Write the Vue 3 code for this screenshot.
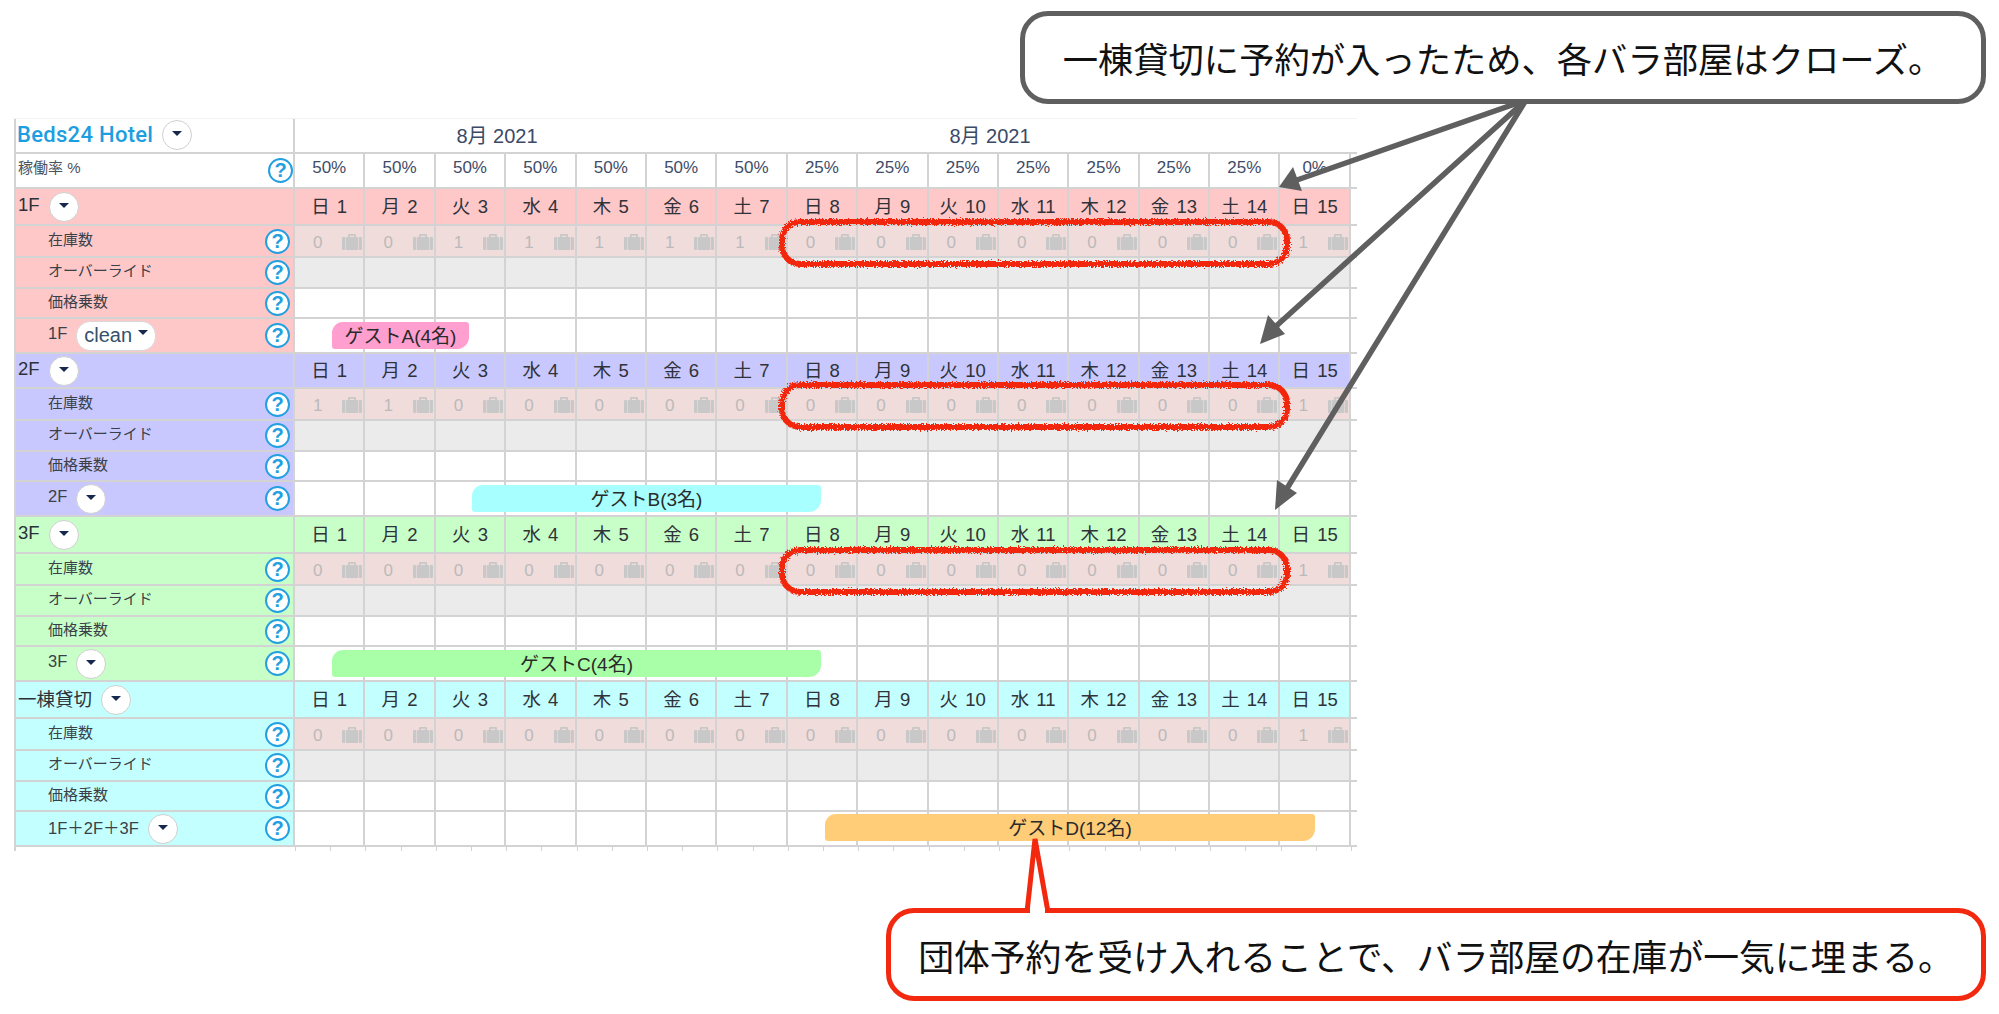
<script setup>
const days = ['日 1', '月 2', '火 3', '水 4', '木 5', '金 6', '土 7', '日 8', '月 9', '火 10', '水 11', '木 12', '金 13', '土 14', '日 15']
const rates = ['50%', '50%', '50%', '50%', '50%', '50%', '50%', '25%', '25%', '25%', '25%', '25%', '25%', '25%', '0%']

const sections = [
  {
    name: '1F', key: 'one', foot: '1F', pill: true,
    stock: [0, 0, 1, 1, 1, 1, 1, 0, 0, 0, 0, 0, 0, 0, 1],
    guest: { label: 'ゲストA(4名)', cls: 'pink' }
  },
  {
    name: '2F', key: 'two', foot: '2F',
    stock: [1, 1, 0, 0, 0, 0, 0, 0, 0, 0, 0, 0, 0, 0, 1],
    guest: { label: 'ゲストB(3名)', cls: 'cyan' }
  },
  {
    name: '3F', key: 'three', foot: '3F',
    stock: [0, 0, 0, 0, 0, 0, 0, 0, 0, 0, 0, 0, 0, 0, 1],
    guest: { label: 'ゲストC(4名)', cls: 'green' }
  },
  {
    name: '一棟貸切', key: 'all', foot: '1F＋2F＋3F',
    stock: [0, 0, 0, 0, 0, 0, 0, 0, 0, 0, 0, 0, 0, 0, 1],
    guest: { label: 'ゲストD(12名)', cls: 'orange' }
  }
]

const loops = [222, 385, 550]
</script>

<template>
  <div class="page">
    <div class="sheet">
      <div class="row month-row">
        <div class="label top-label">
          <span class="hotel">Beds24 Hotel</span>
          <span class="drop"><i class="caret"></i></span>
        </div>
        <div class="months">
          <span class="month first">8月 2021</span>
          <span class="month second">8月 2021</span>
        </div>
      </div>

      <div class="row rate-row">
        <div class="label rate-label">
          <span class="rate-text">稼働率 %</span>
          <span class="help">?</span>
        </div>
        <div v-for="(r, i) in rates" :key="i" class="cell rate">{{ r }}</div>
      </div>

      <div v-for="s in sections" :key="s.key" class="section" :class="s.key">
        <div class="row head-row">
          <div class="label">
            <span class="sec-name">{{ s.name }}</span>
            <span class="drop"><i class="caret"></i></span>
          </div>
          <div v-for="d in days" :key="d" class="cell day">{{ d }}</div>
        </div>

        <div class="row stock-row">
          <div class="label sub"><span class="sub-text">在庫数</span><span class="help">?</span></div>
          <div v-for="(n, i) in s.stock" :key="i" class="cell stock">
            <span class="num">{{ n }}</span>
            <svg class="bag" viewBox="0 0 20 16" width="20" height="16">
              <path d="M6 3.500V1.200C6 .5 6.500 0 7.200 0h5.600c.7 0 1.200.5 1.200 1.200v2.300h-1.800V1.700H7.800v1.800z" />
              <rect x="0" y="3" width="3.400" height="13" rx="1" />
              <rect x="4" y="3" width="12" height="13" rx=".8" />
              <rect x="16.600" y="3" width="3.400" height="13" rx="1" />
            </svg>
          </div>
        </div>

        <div class="row over-row">
          <div class="label sub"><span class="sub-text">オーバーライド</span><span class="help">?</span></div>
          <div v-for="d in days" :key="d" class="cell over"></div>
        </div>

        <div class="row price-row">
          <div class="label sub"><span class="sub-text">価格乗数</span><span class="help">?</span></div>
          <div v-for="d in days" :key="d" class="cell blank"></div>
        </div>

        <div class="row book-row">
          <div class="label sub">
            <span class="foot-text">{{ s.foot }}</span>
            <span v-if="s.pill" class="pill">clean<i class="caret"></i></span>
            <span v-else class="drop"><i class="caret"></i></span>
            <span class="help">?</span>
          </div>
          <div v-for="d in days" :key="d" class="cell blank"></div>
          <div class="bar" :class="s.guest.cls">{{ s.guest.label }}</div>
        </div>
      </div>

      <div class="ticks"></div>
    </div>

    <!-- callouts and hand drawn marks sit on top of the table -->
    <svg class="marks" width="1999" height="1014" viewBox="0 0 1999 1014">
      <defs>
        <filter id="rough" x="-5%" y="-30%" width="110%" height="160%">
          <feTurbulence type="fractalNoise" baseFrequency="0.7" numOctaves="2" seed="4" />
          <feDisplacementMap in="SourceGraphic" scale="6" />
        </filter>
      </defs>

      <g fill="none" stroke="#f2280f" stroke-width="6" filter="url(#rough)">
        <rect v-for="y in loops" :key="y" x="782" :y="y" width="505" height="42" rx="18" />
      </g>

      <g stroke="#5f5f5f" stroke-width="5.500" stroke-linecap="round">
        <line x1="1526" y1="100" x2="1297" y2="180" />
        <line x1="1526" y1="100" x2="1274" y2="328" />
        <line x1="1526" y1="100" x2="1286" y2="490" />
      </g>
      <g fill="#5f5f5f">
        <polygon points="1279,187 1293,167 1302,191" />
        <polygon points="1260,344 1268,315 1285,334" />
        <polygon points="1275,510 1277,480 1297,493" />
      </g>

      <path d="M1027 912 L1035 839 L1048 912" fill="#fff" stroke="#f2280f" stroke-width="5" stroke-linejoin="miter" />
    </svg>

    <div class="callout gray">一棟貸切に予約が入ったため、各バラ部屋はクローズ。</div>
    <div class="callout red">団体予約を受け入れることで、バラ部屋の在庫が一気に埋まる。</div>
    <div class="notch"></div>
  </div>
</template>

<style scoped>
.page {
  position: relative;
  width: 1999px;
  height: 1014px;
  padding: 118px 0 0 14px;
  box-sizing: border-box;
  overflow: hidden;
  background: #fff;
  font-family: "Liberation Sans", "Noto Sans CJK JP", sans-serif;
  color: #34425a;
}

.sheet {
  width: 1343px;
}

.row {
  position: relative;
  display: grid;
  grid-template-columns: 281px repeat(15, 70.4px);
  box-sizing: border-box;
  border-bottom: 2px solid #d3d3d3;
}

.month-row {
  height: 36px;
  grid-template-columns: 281px 1fr;
  border-top: 1px solid #f2f2f2;
}

.rate-row {
  height: 35px;
}

.label {
  display: flex;
  align-items: center;
  box-sizing: border-box;
  padding-left: 2px;
  border-left: 2px solid #d3d3d3;
  border-right: 2px solid #d3d3d3;
}

.top-label {
  padding-left: 1px;
  padding-bottom: 2px;
}

.hotel {
  font-family: Roboto, "Liberation Sans", sans-serif;
  font-size: 22px;
  font-weight: 500;
  letter-spacing: 0.3px;
  color: #1d9ee0;
}

.drop {
  flex: none;
  display: flex;
  justify-content: center;
  width: 30px;
  height: 30px;
  margin-left: 9px;
  padding-top: 10px;
  box-sizing: border-box;
  border: 1px solid #cfcfcf;
  border-radius: 50%;
  background: #fff;
}

.caret {
  width: 0;
  height: 0;
  border-left: 5px solid transparent;
  border-right: 5px solid transparent;
  border-top: 5px solid #16284d;
}

.months {
  display: flex;
  align-items: center;
  font-size: 20px;
  padding-bottom: 2px;
}

.month {
  text-align: center;
  color: #3b4a66;
}

.month.first {
  width: 404px;
}

.month.second {
  width: 582px;
}

.rate-label {
  justify-content: space-between;
  padding-right: 0;
}

.rate-text {
  font-size: 15px;
  color: #4a5260;
  padding-bottom: 8px;
}

.help {
  flex: none;
  display: flex;
  align-items: center;
  justify-content: center;
  width: 25px;
  height: 25px;
  margin-left: auto;
  box-sizing: border-box;
  border: 2px solid #24a0e0;
  border-radius: 50%;
  background: #fff;
  color: #24a0e0;
  font-size: 20px;
  font-weight: 700;
}

.cell {
  box-sizing: border-box;
  border-right: 2px solid #d3d3d3;
}

.rate {
  display: flex;
  justify-content: center;
  padding-top: 4px;
  font-size: 17px;
  color: #3f4d68;
}

.section .head-row {
  height: 37px;
}

.section.two .head-row {
  height: 35px;
}

.stock-row {
  height: 32px;
}

.over-row {
  height: 31px;
}

.price-row {
  height: 30px;
}

.book-row {
  height: 35px;
}

.one .label,
.one .day {
  background: #ffc8c8;
}

.two .label,
.two .day {
  background: #c8c8ff;
}

.three .label,
.three .day {
  background: #c8ffc8;
}

.all .label,
.all .day {
  background: #c4ffff;
}

.sec-name {
  font-size: 18.500px;
  color: #2c3038;
  padding-bottom: 3px;
}

.day {
  display: flex;
  align-items: center;
  justify-content: center;
  padding-bottom: 4px;
  font-size: 18.500px;
  word-spacing: 2px;
  color: #2f3238;
}

.sub {
  padding-left: 32px;
  padding-right: 3px;
}

.sub-text {
  font-size: 15px;
  color: #3a3f48;
  padding-bottom: 6px;
}

.foot-text {
  font-size: 16.500px;
  color: #3a3f48;
  padding-bottom: 4px;
}

.pill {
  flex: none;
  display: flex;
  align-items: center;
  gap: 6px;
  height: 28px;
  margin-left: 9px;
  padding: 0 7px;
  border: 1px solid #d8d8d8;
  border-radius: 14px;
  background: #fff;
  font-size: 20px;
  color: #34506b;
}

.pill .caret {
  margin-bottom: 6px;
}

.stock {
  position: relative;
  overflow: hidden;
  background: #f1dcdc;
}

.num {
  position: absolute;
  left: 18px;
  top: 7px;
  font-size: 17px;
  color: #bababa;
}

.bag {
  position: absolute;
  right: 1px;
  top: 8px;
  fill: #c8c8c8;
}

.over {
  background: #ebebeb;
}

.blank {
  background: #fff;
}

.bar {
  position: absolute;
  top: 3px;
  height: 27px;
  padding-bottom: 3px;
  box-sizing: border-box;
  display: flex;
  align-items: center;
  justify-content: center;
  font-size: 19px;
  color: #2a2a2a;
  border-radius: 11px 3px 12px 3px;
}

.pink {
  left: 318px;
  width: 137px;
  background: #ff9fcf;
}

.cyan {
  left: 458px;
  width: 349px;
  background: #a8ffff;
}

.green {
  left: 318px;
  width: 489px;
  background: #a8ffa8;
}

.orange {
  top: 2px;
  left: 811px;
  width: 490px;
  background: #ffcc77;
}

.ticks {
  height: 4px;
  background:
    repeating-linear-gradient(to right, #d3d3d3 0 1px, transparent 1px 35.200px) 281px 0 no-repeat,
    linear-gradient(to right, #d3d3d3 0 2px, transparent 2px);
}

.marks {
  position: absolute;
  left: 0;
  top: 0;
  pointer-events: none;
}

.callout {
  position: absolute;
  display: flex;
  align-items: center;
  justify-content: center;
  box-sizing: border-box;
  border-radius: 28px;
  background: #fff;
  color: #111;
  font-family: "Noto Sans CJK JP", sans-serif;
  font-size: 35.300px;
}

.callout.gray {
  left: 1020px;
  top: 11px;
  width: 966px;
  height: 93px;
  border: 5px solid #5f5f5f;
}

.callout.red {
  left: 886px;
  top: 908px;
  width: 1100px;
  height: 93px;
  border: 5px solid #f2280f;
  font-size: 35.800px;
}

.notch {
  position: absolute;
  left: 1030px;
  top: 908px;
  width: 15px;
  height: 6px;
  background: #fff;
}
</style>
